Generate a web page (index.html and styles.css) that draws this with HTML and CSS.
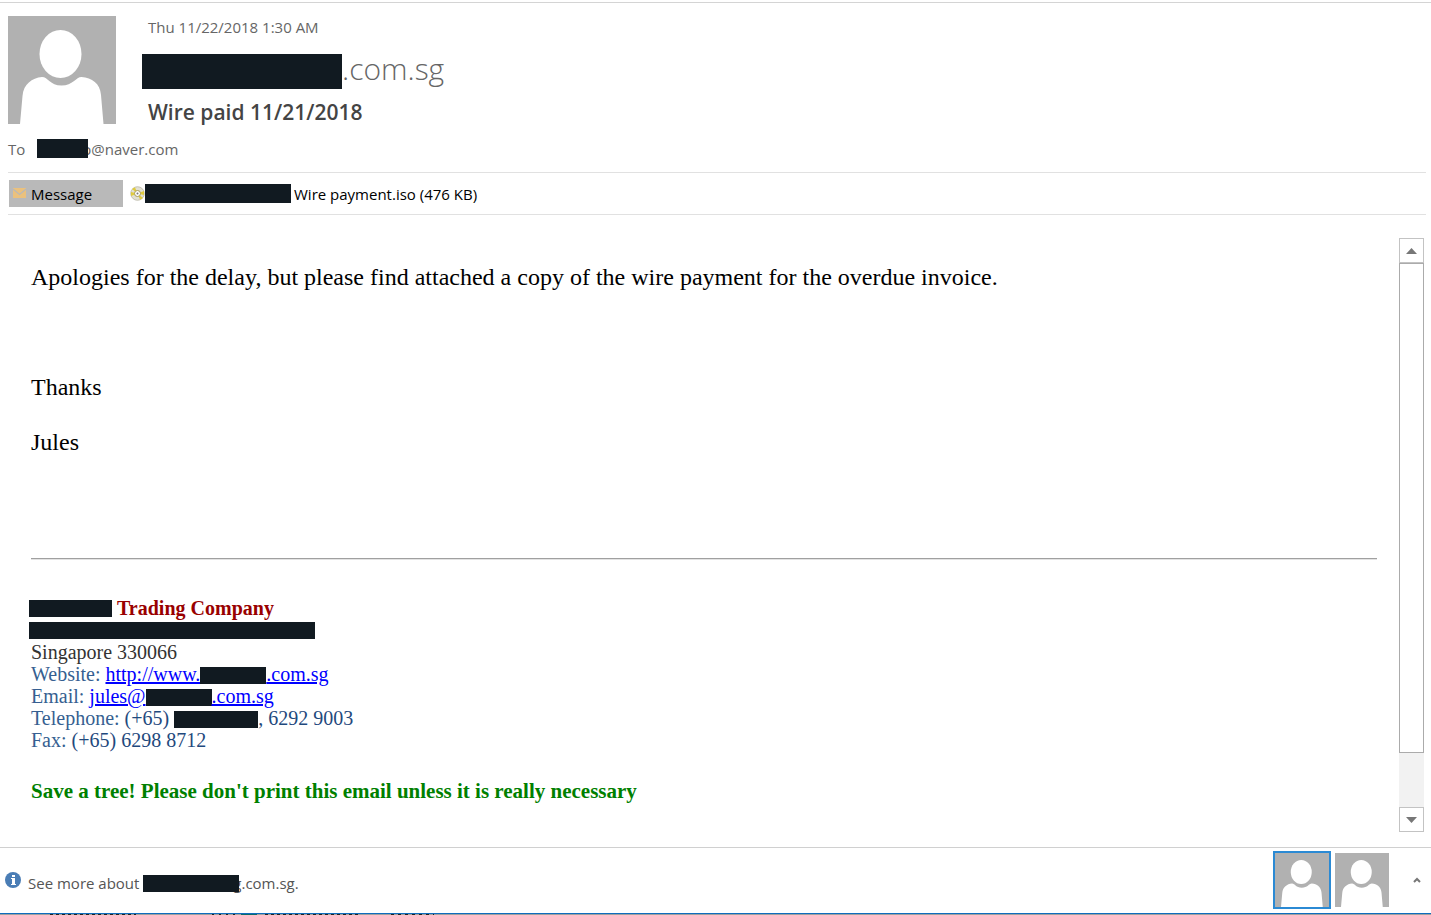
FILE: index.html
```html
<!DOCTYPE html>
<html lang="en">
<head>
<meta charset="UTF-8">
<meta name="viewport" content="width=device-width, initial-scale=1.0">
<title>Wire paid 11/21/2018</title>
<link rel="stylesheet" href="styles.css">
</head>
<body>

<svg class="symbols" aria-hidden="true">
    <symbol id="person" viewBox="0 0 108 108">
        <rect width="108" height="108" fill="#b1b1b1"/>
        <ellipse cx="52.500" cy="38" rx="21" ry="24" fill="#fff"/>
        <path d="M12 108 L14.500 80 C15.500 68 24 62 34 61 C40 61 42 69.500 53.500 69.500 C65 69.500 68 61 73.500 61 C84 62 92 67 93 79 L95.500 108 Z" fill="#fff"/>
    </symbol>
</svg>

<header class="mail-header">
    <div class="sender-row">
        <svg class="avatar"><use href="#person"/></svg>
        <div class="sender-info">
            <div class="date">Thu 11/22/2018 1:30 AM</div>
            <div class="sender"><span class="redacted w200"></span>.com.sg</div>
            <h1>Wire paid 11/21/2018</h1>
        </div>
    </div>
    <div class="to-row">
        <span class="to-label">To</span>
        <span class="to-address"><span class="redacted w51 over"></span>o@naver.com</span>
    </div>
</header>

<div class="attachments">
    <button class="message-tab" type="button">
        <svg width="14" height="14" viewBox="0 0 14 14">
            <rect width="13" height="10" y="1" fill="#ebc17d"/>
            <path d="M0 2 L6.500 7.500 L13 2" fill="none" stroke="#b9b9b9" stroke-width="1.200"/>
        </svg>
        Message
    </button>
    <a class="attachment" href="#">
        <svg width="15" height="18" viewBox="0 0 15 18">
            <circle cx="7.500" cy="8.500" r="6.800" fill="#e2e0d2" stroke="#b9b6a4" stroke-width="0.800"/>
            <path d="M7.500 8.500 L2 4 A7 7 0 0 1 5 2.500 Z M7.500 8.500 L13 13 A7 7 0 0 1 10 14.500 Z M7.500 8.500 L14 6 L14 10 Z M7.500 8.500 L1 7 L1 11 Z" fill="#e0cb3c"/>
            <circle cx="7.500" cy="8.500" r="3" fill="#fff" stroke="#a89b52"/>
            <circle cx="7.500" cy="8.500" r="1" fill="#777"/>
        </svg>
        <span class="redacted w146"></span>
        <span class="file-name">Wire payment.iso (476 KB)</span>
    </a>
</div>

<main class="mail-body">
    <div class="content">
        <p>Apologies for the delay, but please find attached a copy of the wire payment for the overdue invoice.</p>
        <p>&nbsp;</p>
        <p>Thanks</p>
        <p>Jules</p>
        <p>&nbsp;</p>
        <hr>
        <div class="signature">
            <div class="company"><span class="redacted w83"></span> Trading Company</div>
            <div class="street"><span class="redacted w286"></span></div>
            <div class="city">Singapore 330066</div>
            <div><span class="label">Website:</span> <a href="#">http://www.<span class="redacted w66"></span>.com.sg</a></div>
            <div><span class="label">Email:</span> <a href="#">jules@<span class="redacted w66"></span>.com.sg</a></div>
            <div><span class="label">Telephone:</span> (+65) <span class="redacted w84"></span>, 6292 9003</div>
            <div><span class="label">Fax:</span> (+65) 6298 8712</div>
        </div>
        <div class="save-tree">Save a tree! Please don't print this email unless it is really necessary</div>
    </div>
    <div class="scrollbar">
        <button type="button" aria-label="Scroll up"><svg width="11" height="6" viewBox="0 0 11 6"><path d="M0 6 L5.500 0 L11 6 Z" fill="#777"/></svg></button>
        <div class="track"><div class="thumb"></div></div>
        <button type="button" aria-label="Scroll down"><svg width="11" height="6" viewBox="0 0 11 6"><path d="M0 0 L5.500 6 L11 0 Z" fill="#777"/></svg></button>
    </div>
</main>

<footer class="people-pane">
    <svg class="info-icon" width="16" height="16" viewBox="0 0 16 16">
        <circle cx="8" cy="8" r="8" fill="#4a7db5"/>
        <path d="M7 3h3v2H7z M6 6h4v6h1v1H6v-1h1V7H6z" fill="#fff"/>
    </svg>
    <span class="see-more">See more about <span class="redacted w96 over"></span>g.com.sg.</span>
    <div class="people">
        <button class="person selected" type="button" aria-label="Sender"><svg><use href="#person"/></svg></button>
        <button class="person" type="button" aria-label="Recipient"><svg><use href="#person"/></svg></button>
    </div>
    <button class="expand" type="button" aria-label="Expand"><svg width="8" height="6" viewBox="0 0 8 6"><path d="M1 5 L4 2 L7 5" fill="none" stroke="#777" stroke-width="2"/></svg></button>
</footer>
<div class="window-edge"></div>

</body>
</html>
```
FILE: styles.css
```css
* {
    box-sizing: border-box;
}

body {
    margin: 0;
    padding-top: 2px;
    min-height: 100vh;
    display: flex;
    flex-direction: column;
    background: #fff;
    font-family: "Open Sans", "Noto Sans", sans-serif;
    font-size: 15px;
    color: #666;
}

button {
    padding: 0;
    border: none;
    background: none;
    font: inherit;
    cursor: pointer;
}

svg {
    display: block;
    flex: none;
}

.symbols {
    position: absolute;
    width: 0;
    height: 0;
}

/* blacked out text */
.redacted {
    display: inline-block;
    height: 19px;
    background: #111a21;
}

.over {
    position: relative;
    margin-right: -6px;
}

.w51 { width: 51px; }
.w66 { width: 66px; }
.w83 { width: 83px; }
.w84 { width: 84px; }
.w96 { width: 96px; }
.w146 { width: 146px; }
.w200 { width: 200px; }
.w286 { width: 286px; }

/* header */
.mail-header {
    border-top: 1px solid #d4d4d4;
    padding: 13px 8px 0;
}

.sender-row {
    display: flex;
    gap: 26px;
}

.avatar {
    width: 108px;
    height: 108px;
}

.date {
    padding-left: 6px;
    line-height: 22px;
}

.sender {
    display: flex;
    margin-top: 16px;
    font-size: 30px;
    font-weight: 300;
    line-height: 30px;
    height: 35px;
}

.sender .redacted {
    height: 35px;
}

h1 {
    margin: 8px 0 0;
    padding-left: 6px;
    font-size: 21px;
    font-weight: 600;
    line-height: 30px;
    color: #444;
}

.to-row {
    display: flex;
    align-items: center;
    gap: 12px;
    height: 45px;
    padding-bottom: 2px;
}

.to-address {
    display: flex;
    align-items: center;
    line-height: 20px;
}

/* attachments */
.attachments {
    display: flex;
    align-items: center;
    gap: 7px;
    height: 43px;
    margin: 0 5px 0 8px;
    padding-left: 1px;
    border-top: 1px solid #e1e1e1;
    border-bottom: 1px solid #e1e1e1;
    color: #000;
}

.message-tab {
    display: flex;
    align-items: center;
    gap: 4px;
    width: 114px;
    height: 27px;
    padding-left: 4px;
    background: #b9b9b9;
    color: #000;
}

.attachment {
    display: flex;
    align-items: center;
    color: #000;
    text-decoration: none;
}

.file-name {
    margin-left: 3px;
}

/* message */
.mail-body {
    flex: 1;
    display: flex;
    padding: 23px 7px 15px 31px;
    font-family: "Liberation Serif", "Times New Roman", serif;
    color: #000;
}

.content {
    flex: 1;
    padding-top: 26px;
    margin-right: 22px;
    font-size: 24px;
    line-height: 27px;
}

.content p {
    margin: 0 0 28px;
}

.content hr {
    margin: 47px 0 37px;
    border: none;
    border-top: 1px solid #a0a0a0;
    border-bottom: 1px solid #e3e3e3;
}

.signature {
    font-size: 20px;
    line-height: 22px;
    color: #1f497d;
}

.signature > div {
    height: 22px;
    white-space: nowrap;
}

.signature .redacted {
    height: 17px;
    vertical-align: -3px;
}

.signature .company,
.signature .street {
    display: flex;
    align-items: center;
    gap: 5px;
    margin-left: -2px;
}

.company {
    font-weight: bold;
    color: #990000;
}

.city {
    color: #333;
}

.label {
    color: #365f91;
}

.signature a {
    color: #0000ff;
}

.save-tree {
    margin-top: 29px;
    font-size: 21px;
    font-weight: bold;
    line-height: 22px;
    color: #008000;
}

.scrollbar {
    display: flex;
    flex-direction: column;
    width: 25px;
    background: #f2f2f2;
}

.scrollbar button {
    display: flex;
    align-items: center;
    justify-content: center;
    height: 25px;
    border: 1px solid #c3c3c3;
    background: #fff;
}

.track {
    flex: 1;
}

.thumb {
    height: 90%;
    border: 1px solid #ababab;
    background: #fff;
}

/* people pane */
.people-pane {
    display: flex;
    align-items: center;
    height: 67px;
    padding: 0 10px 1px 5px;
    border-top: 1px solid #d0d0d0;
    border-bottom: 1px solid #0f6cbd;
    color: #555;
}

.info-icon {
    margin-right: 7px;
}

.see-more {
    display: flex;
    align-items: center;
    padding-top: 6px;
    white-space: pre;
}

.see-more .redacted {
    height: 17px;
}

.people {
    display: flex;
    gap: 2px;
    margin-left: auto;
}

.person {
    width: 58px;
    height: 58px;
    border: 2px solid transparent;
}

.person.selected {
    border-color: #2b8ad4;
}

.person svg {
    width: 54px;
    height: 54px;
}

.expand {
    margin-left: 22px;
}

/* sliver of the window behind */
.window-edge {
    height: 1px;
    background:
        repeating-linear-gradient(90deg, #222 0 3px, #a0a0a0 3px 6px) 50px 0 / 86px 1px no-repeat,
        repeating-linear-gradient(90deg, #222 0 2px, #a0a0a0 2px 7px) 212px 0 / 24px 1px no-repeat,
        linear-gradient(#0b6b6b, #0b6b6b) 241px 0 / 16px 1px no-repeat,
        repeating-linear-gradient(90deg, #222 0 3px, #a0a0a0 3px 6px) 265px 0 / 95px 1px no-repeat,
        repeating-linear-gradient(90deg, #222 0 3px, #a0a0a0 3px 7px) 391px 0 / 43px 1px no-repeat,
        #a0a0a0;
}
```
